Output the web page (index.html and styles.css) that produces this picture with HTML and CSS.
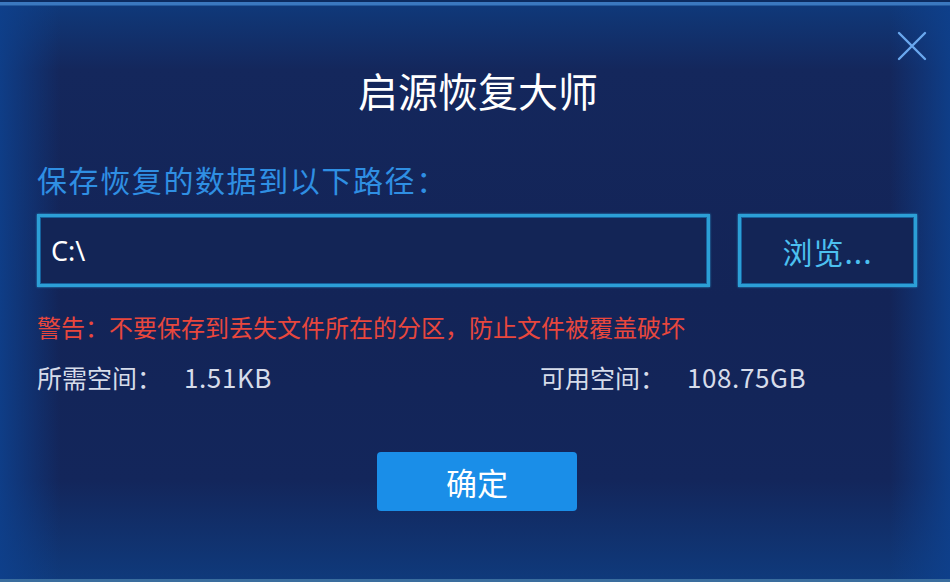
FILE: index.html
```html
<!DOCTYPE html>
<html lang="zh-CN">
<head>
<meta charset="utf-8">
<title>启源恢复大师</title>
<link rel="stylesheet" href="styles.css">
</head>
<body>
<div class="dialog">
  <div class="topline"></div>
  <button class="close" aria-label="关闭">
    <svg width="32" height="32" viewBox="0 0 32 32"><path d="M3 3 L29 29 M29 3 L3 29" stroke="#6aa8ee" stroke-width="2.4" stroke-linecap="round" fill="none"/></svg>
  </button>
  <div class="content">
    <h1 class="title">启源恢复大师</h1>
    <div class="label">保存恢复的数据到以下路径：</div>
    <div class="path-row">
      <div class="path-input">C:\</div>
      <button class="browse">浏览...</button>
    </div>
    <div class="warning">警告：不要保存到丢失文件所在的分区，防止文件被覆盖破坏</div>
    <div class="space-row">
      <div class="space">所需空间：<span class="num">1.51KB</span></div>
      <div class="space">可用空间：<span class="num">108.75GB</span></div>
    </div>
    <div class="actions">
      <button class="ok">确定</button>
    </div>
  </div>
  <div class="bottomline"></div>
</div>
</body>
</html>
```
FILE: styles.css
```css
* { box-sizing: border-box; }
html, body { margin: 0; padding: 0; }
body {
  width: 950px;
  height: 582px;
  overflow: hidden;
  font-family: "Noto Sans CJK SC", "Noto Sans", "Liberation Sans", sans-serif;
}
.dialog {
  position: relative;
  width: 950px;
  height: 582px;
  display: flex;
  flex-direction: column;
  background:
    linear-gradient(to right, rgba(14,64,140,0.9) 0, rgba(14,64,140,0) 60px, rgba(14,64,140,0) 890px, rgba(14,64,140,0.9) 950px),
    linear-gradient(to bottom, #0f3a7c 0, #14275c 70px, #132457 300px, #13265b 480px, #0f3a7c 582px);
}
.topline {
  height: 6px;
  flex: none;
  background: linear-gradient(to bottom, #0c2b60 0, #0c2b60 2px, #3b78bf 2px, #3b78bf 5px, #235aa0 5px);
}
.bottomline {
  height: 3px;
  margin-top: auto;
  background: #3a6d9e;
}
.close {
  position: absolute;
  top: 30px;
  right: 22px;
  width: 32px;
  height: 32px;
  padding: 0;
  border: 0;
  background: none;
}
.content {
  display: flex;
  flex-direction: column;
  padding: 60px 33px 0 37px;
}
.title {
  margin: 0;
  font-size: 40px;
  line-height: 48px;
  font-weight: 400;
  color: #ffffff;
  text-align: center;
  padding-left: 2px;
}
.label {
  margin-top: 47px;
  font-size: 30px;
  line-height: 36px;
  letter-spacing: 1.6px;
  color: #2f8fe3;
}
.path-row {
  margin-top: 17px;
  display: flex;
  gap: 28px;
  height: 73px;
}
.path-input {
  width: 673px;
  border: 3px solid #2c9fd6;
  box-shadow: inset 0 0 0 1px #16619c, 0 0 2px #2c9fd6;
  background: #132556;
  color: #ffffff;
  font-family: "Noto Sans", "Liberation Sans", sans-serif;
  font-size: 27px;
  display: flex;
  align-items: center;
  padding-left: 11px;
}
.browse {
  width: 179px;
  border: 3px solid #2c9fd6;
  box-shadow: inset 0 0 0 1px #16619c, 0 0 2px #2c9fd6;
  background: #132556;
  color: #4cc0f0;
  font-family: "Noto Sans CJK SC", sans-serif;
  font-size: 30px;
  letter-spacing: 1px;
  padding: 0;
}
.warning {
  margin-top: 25px;
  font-size: 24px;
  line-height: 30px;
  color: #e8473d;
}
.space-row {
  margin-top: 19px;
  display: grid;
  grid-template-columns: 503px 1fr;
}
.space {
  font-size: 25px;
  line-height: 32px;
  color: #d6dcea;
}
.num {
  margin-left: 22px;
  font-size: 26px;
  letter-spacing: 0.6px;
}
.actions {
  margin-top: 59px;
  display: flex;
  justify-content: center;
}
.ok {
  width: 200px;
  height: 59px;
  border: 0;
  border-radius: 4px;
  background: #1a8ee8;
  color: #ffffff;
  font-family: "Noto Sans CJK SC", sans-serif;
  font-size: 31px;
  padding: 0;
}
```
